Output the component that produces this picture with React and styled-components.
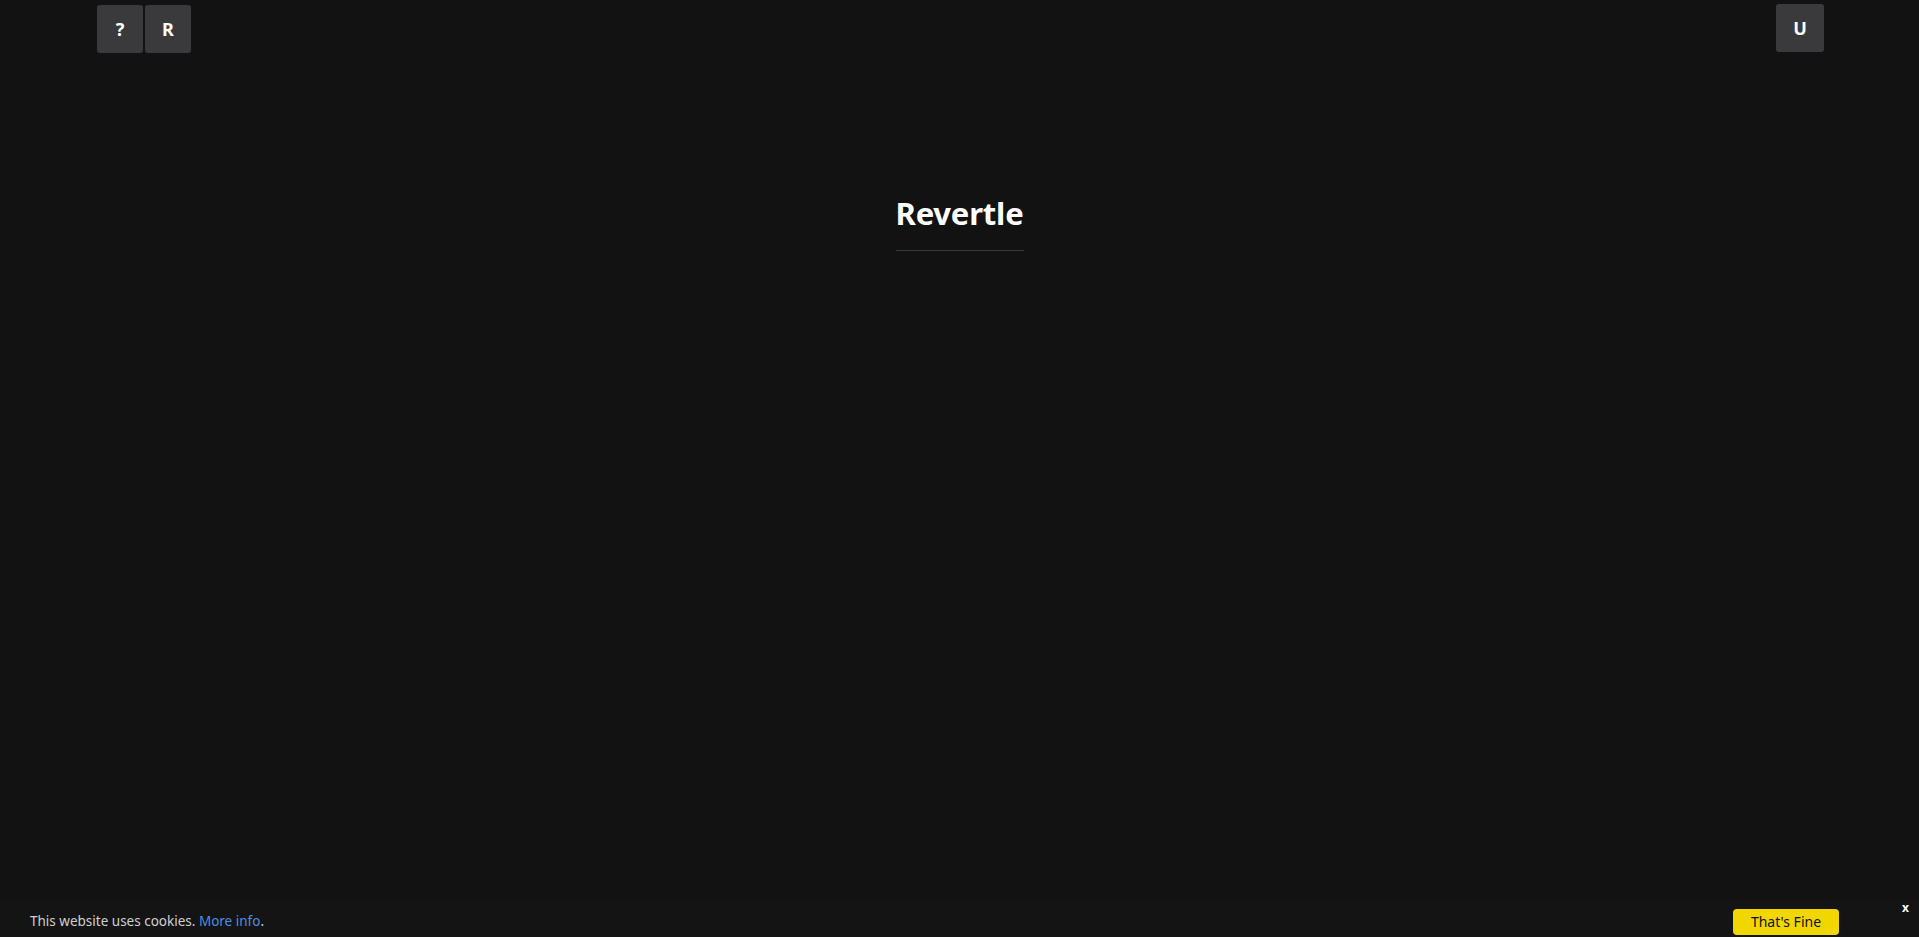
import React from "react";
import styled, { createGlobalStyle } from "styled-components";

const GlobalStyle = createGlobalStyle`
  html, body {
    margin: 0;
    padding: 0;
    background: #121212;
    font-family: "Noto Sans", "Open Sans", sans-serif;
  }
`;

const Page = styled.div`
  min-height: 937px;
  display: flex;
  flex-direction: column;
  background: #121212;
`;

const TopBar = styled.div`
  display: flex;
  justify-content: space-between;
  align-items: flex-start;
  padding: 4px 95px 0 97px;
`;

const ButtonGroup = styled.div`
  display: flex;
  gap: 2px;
  padding-top: ${(p) => p.$offset || 0}px;
`;

const IconButton = styled.button`
  width: ${(p) => p.$size || 46}px;
  height: 48px;
  border: none;
  border-radius: 3px;
  background: #3a3a3c;
  color: #ffffff;
  font-family: "Noto Sans", sans-serif;
  font-weight: 700;
  font-size: 18px;
  display: flex;
  align-items: center;
  justify-content: center;
  cursor: pointer;
  padding: 0;
`;

const Heading = styled.div`
  display: flex;
  flex-direction: column;
  align-items: center;
  margin-top: 140px;
`;

const Title = styled.h1`
  margin: 0;
  color: #ffffff;
  font-family: "Noto Sans", sans-serif;
  font-weight: 700;
  font-size: 31px;
  line-height: 40px;
  letter-spacing: -0.2px;
`;

const Divider = styled.div`
  width: 128px;
  height: 1px;
  background: #3a3a3a;
  margin-top: 17px;
`;

const Spacer = styled.div`
  flex: 1;
`;

const CookieBar = styled.div`
  height: 36px;
  background: #141414;
  display: flex;
  align-items: center;
  justify-content: space-between;
  padding: 0 80px 0 30px;
  position: relative;
`;

const CookieText = styled.span`
  color: #d0d0d0;
  font-size: 13.5px;
  font-family: "Noto Sans", sans-serif;
  margin-top: 4px;

  a {
    color: #4a8fe0;
    text-decoration: none;
  }
`;

const AcceptButton = styled.button`
  width: 106px;
  height: 26px;
  margin-top: 5px;
  border: none;
  border-radius: 4px;
  background: #f1d600;
  color: #111111;
  font-family: "Noto Sans", sans-serif;
  font-size: 14px;
  padding: 0;
  cursor: pointer;
`;

const CloseMark = styled.span`
  position: absolute;
  right: 10px;
  top: -2px;
  color: #ffffff;
  font-weight: 700;
  font-size: 12px;
  font-family: "Noto Sans", sans-serif;
  cursor: pointer;
`;

export default function App() {
  return (
    <Page>
      <GlobalStyle />
      <TopBar>
        <ButtonGroup $offset={1}>
          <IconButton>?</IconButton>
          <IconButton>R</IconButton>
        </ButtonGroup>
        <ButtonGroup>
          <IconButton $size={48}>U</IconButton>
        </ButtonGroup>
      </TopBar>
      <Heading>
        <Title>Revertle</Title>
        <Divider />
      </Heading>
      <Spacer />
      <CookieBar>
        <CookieText>
          This website uses cookies. <a href="#">More info</a>.
        </CookieText>
        <AcceptButton>That's Fine</AcceptButton>
        <CloseMark>x</CloseMark>
      </CookieBar>
    </Page>
  );
}
